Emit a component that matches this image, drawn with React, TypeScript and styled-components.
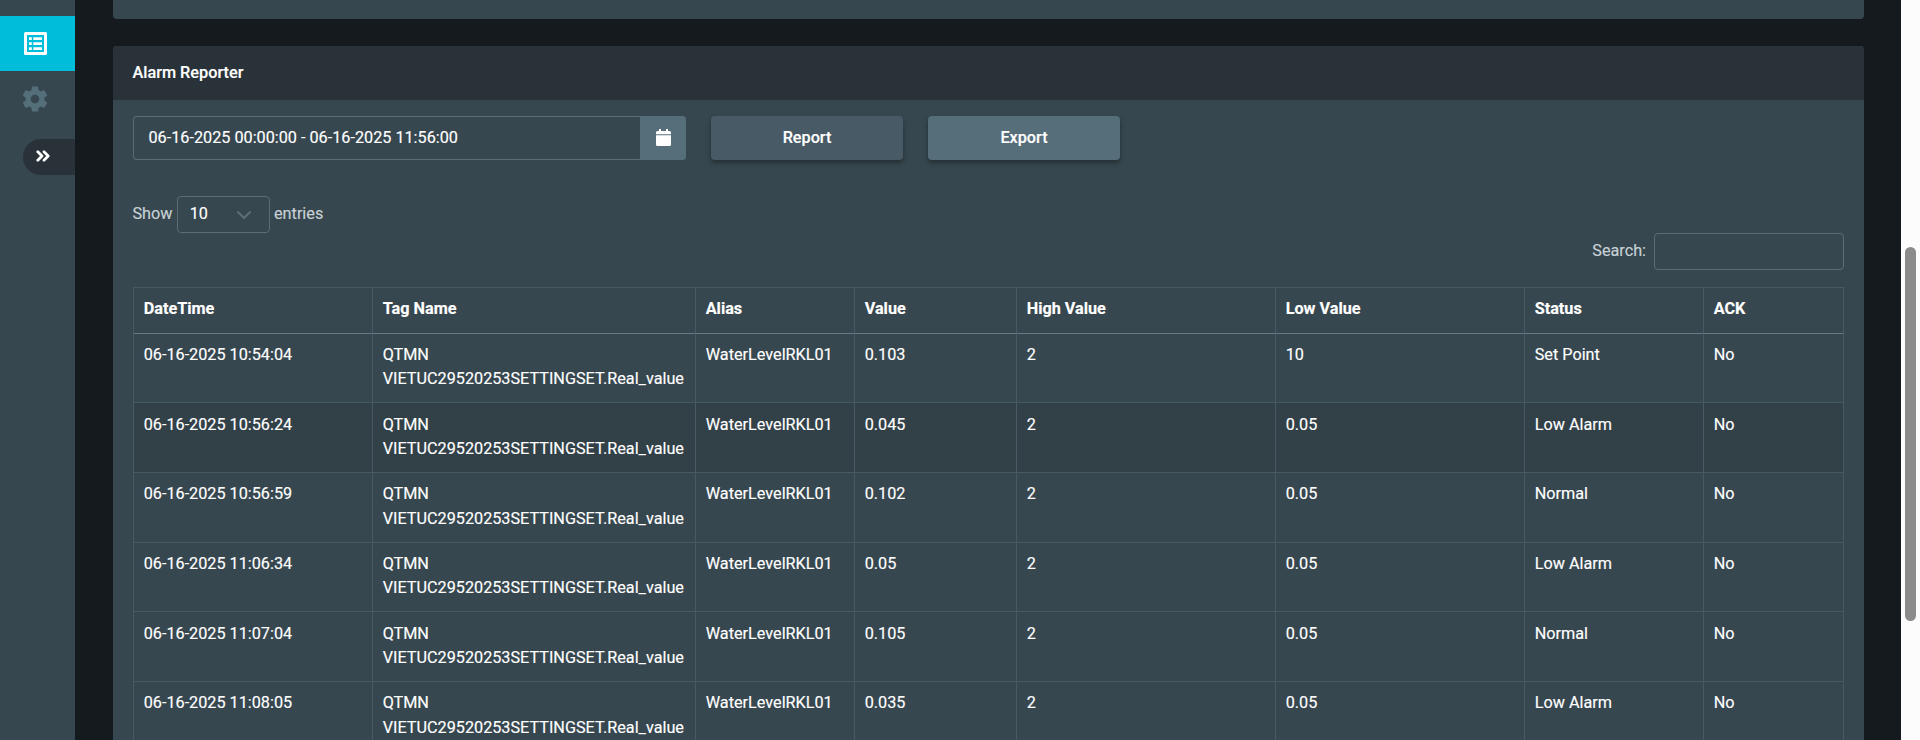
import styled, { createGlobalStyle } from "styled-components";

type Alarm = {
  time: string;
  value: string;
  low: string;
  status: string;
};

const columns = ["DateTime", "Tag Name", "Alias", "Value", "High Value", "Low Value", "Status", "ACK"];

const alarms: Alarm[] = [
  { time: "06-16-2025 10:54:04", value: "0.103", low: "10", status: "Set Point" },
  { time: "06-16-2025 10:56:24", value: "0.045", low: "0.05", status: "Low Alarm" },
  { time: "06-16-2025 10:56:59", value: "0.102", low: "0.05", status: "Normal" },
  { time: "06-16-2025 11:06:34", value: "0.05", low: "0.05", status: "Low Alarm" },
  { time: "06-16-2025 11:07:04", value: "0.105", low: "0.05", status: "Normal" },
  { time: "06-16-2025 11:08:05", value: "0.035", low: "0.05", status: "Low Alarm" },
];

const ListIcon = (): JSX.Element => (
  <svg width="23" height="23" viewBox="0 0 23 23" fill="currentColor">
    <path
      fillRule="evenodd"
      d="M1.5 0h20A1.5 1.5 0 0 1 23 1.5v20a1.5 1.5 0 0 1-1.5 1.5h-20A1.5 1.5 0 0 1 0 21.5v-20A1.5 1.5 0 0 1 1.5 0zM3 3v17h17V3z"
    />
    <path d="M5 5.200h2.800v2.800H5zM9.300 5.200H18v2.800H9.300zM5 10.200h2.800v2.800H5zM9.300 10.200H18v2.800H9.300zM5 15.200h2.800v2.800H5zM9.300 15.200H18v2.800H9.300z" />
  </svg>
);

const GearIcon = (): JSX.Element => (
  <svg width="30" height="30" viewBox="0 0 24 24" fill="currentColor">
    <path d="M19.43 12.98c.04-.32.07-.64.07-.98s-.03-.66-.07-.98l2.11-1.65c.19-.15.24-.42.12-.64l-2-3.46c-.12-.22-.39-.3-.61-.22l-2.49 1c-.52-.4-1.08-.73-1.69-.98l-.38-2.65C14.46 2.18 14.25 2 14 2h-4c-.25 0-.46.18-.49.42l-.38 2.65c-.61.25-1.17.59-1.69.98l-2.49-1c-.23-.09-.49 0-.61.22l-2 3.46c-.13.22-.07.49.12.64l2.11 1.65c-.04.32-.07.65-.07.98s.03.66.07.98l-2.11 1.65c-.19.15-.24.42-.12.64l2 3.46c.12.22.39.3.61.22l2.49-1c.52.4 1.08.73 1.69.98l.38 2.65c.03.24.24.42.49.42h4c.25 0 .46-.18.49-.42l.38-2.65c.61-.25 1.17-.59 1.69-.98l2.49 1c.23.09.49 0 .61-.22l2-3.46c.12-.22.07-.49-.12-.64l-2.11-1.65zM12 15.5c-1.93 0-3.5-1.57-3.5-3.5s1.57-3.5 3.5-3.5 3.5 1.57 3.5 3.5-1.57 3.5-3.5 3.5z" />
  </svg>
);

const Sidebar = (): JSX.Element => {
  return (
    <Side>
      <MenuItem $active>
        <ListIcon />
      </MenuItem>
      <MenuItem>
        <GearIcon />
      </MenuItem>
      <Toggle>
        <svg width="14" height="12" viewBox="0 0 14 12">
          <path d="M1.8 1.8 6 6 1.8 10.2M8 1.8 12.2 6 8 10.2" />
        </svg>
      </Toggle>
    </Side>
  );
};

const Filters = (): JSX.Element => {
  return (
    <FilterBar>
      <DateRange>
        <span>06-16-2025 00:00:00 - 06-16-2025 11:56:00</span>
        <DateButton>
          <svg width="15" height="17" viewBox="0 0 15 17">
            <path d="M3 0h2v2h5V0h2v2h1.5A1.5 1.5 0 0 1 15 3.5V5.3H0V3.5A1.5 1.5 0 0 1 1.5 2H3zM0 6.3h15v9.2a1.5 1.5 0 0 1-1.5 1.5h-12A1.5 1.5 0 0 1 0 15.5z" />
          </svg>
        </DateButton>
      </DateRange>
      <Button $color="#475a65">Report</Button>
      <Button $color="#566e7a">Export</Button>
    </FilterBar>
  );
};

const AlarmTable = (): JSX.Element => {
  return (
    <Table>
      <HeadRow>
        {columns.map((name) => (
          <Cell key={name}>{name}</Cell>
        ))}
      </HeadRow>
      {alarms.map((alarm, index) => (
        <Row key={alarm.time} $hover={index === 1}>
          <Cell>{alarm.time}</Cell>
          <Cell>QTMN VIETUC29520253SETTINGSET.Real_value</Cell>
          <Cell>WaterLevelRKL01</Cell>
          <Cell>{alarm.value}</Cell>
          <Cell>2</Cell>
          <Cell>{alarm.low}</Cell>
          <Cell>{alarm.status}</Cell>
          <Cell>No</Cell>
        </Row>
      ))}
    </Table>
  );
};

const App = (): JSX.Element => {
  return (
    <>
      <GlobalStyle />
      <Page>
        <Sidebar />
        <Content>
          <PreviousCard />
          <Card>
            <CardHeader>Alarm Reporter</CardHeader>
            <CardBody>
              <Filters />
              <Length>
                Show
                <Select>
                  10
                  <svg width="16" height="10" viewBox="0 0 16 10">
                    <path d="M1.5 1.5 8 8l6.5-6.5" />
                  </svg>
                </Select>
                entries
              </Length>
              <Search>
                Search:
                <SearchInput />
              </Search>
              <AlarmTable />
            </CardBody>
          </Card>
        </Content>
        <ScrollTrack>
          <ScrollThumb />
        </ScrollTrack>
      </Page>
    </>
  );
};

const GlobalStyle = createGlobalStyle`
  * {
    box-sizing: border-box;
  }
  body {
    margin: 0;
    overflow: hidden;
    background: #141a1e;
    color: #fff;
    font-family: Roboto, sans-serif;
    font-size: 16.23px;
    line-height: 24.4px;
    -webkit-text-stroke: 0.15px;
  }
`;

const Page = styled.div`
  display: flex;
  height: 740px;
  overflow: hidden;
`;

const Side = styled.nav`
  display: flex;
  flex-direction: column;
  width: 75px;
  padding-top: 16px;
  background: #37474f;
`;

const MenuItem = styled.div<{ $active?: boolean }>`
  display: flex;
  align-items: center;
  justify-content: center;
  height: 55px;
  padding-right: ${({ $active }) => ($active ? "4px" : "5px")};
  background: ${({ $active }) => ($active ? "#00bdd9" : "transparent")};
  color: ${({ $active }) => ($active ? "#fff" : "#546e7a")};
`;

const Toggle = styled.div`
  display: flex;
  align-items: center;
  align-self: flex-end;
  width: 52px;
  height: 36px;
  margin-top: 13px;
  padding: 0 0 3px 13px;
  border-radius: 18px 0 0 18px;
  background: #293238;

  svg {
    fill: none;
    stroke: #fff;
    stroke-width: 2.8;
    stroke-linecap: round;
    stroke-linejoin: round;
  }
`;

const Content = styled.main`
  flex: 1;
  padding: 0 37px 0 38px;
`;

const PreviousCard = styled.section`
  height: 19px;
  margin-bottom: 27px;
  border-radius: 0 0 4px 4px;
  background: #37474f;
`;

const Card = styled.section`
  height: 720px;
  border-radius: 4px 4px 0 0;
  background: #37474f;
  overflow: hidden;
`;

const CardHeader = styled.h5`
  height: 54px;
  margin: 0;
  padding: 15px 19.5px;
  background: #293238;
  font-size: 16.25px;
  font-weight: 500;
`;

const CardBody = styled.div`
  padding: 16px 20px;
`;

const FilterBar = styled.div`
  display: flex;
  gap: 25px;
  height: 44px;
`;

const DateRange = styled.div`
  display: flex;
  align-items: center;
  justify-content: space-between;
  width: 553px;
  padding-left: 14.5px;
  border: 1px solid #5a6c75;
  border-right: 0;
  border-radius: 4px;
`;

const DateButton = styled.div`
  display: flex;
  align-items: center;
  justify-content: center;
  width: 46px;
  height: 44px;
  padding-bottom: 1px;
  border-radius: 0 4px 4px 0;
  background: #566e7a;

  svg {
    fill: #fff;
  }
`;

const Button = styled.button<{ $color: string }>`
  width: 192px;
  padding: 1px 0 0;
  border: 0;
  border-radius: 4px;
  background: ${({ $color }) => $color};
  box-shadow: 0 3px 5px rgba(0, 0, 0, 0.35);
  color: #fff;
  font: inherit;
  font-weight: 500;
`;

const Length = styled.label`
  display: flex;
  align-items: center;
  height: 37px;
  margin: 36px 0 0 -0.6px;
  color: #c8d2d6;
`;

const Select = styled.div`
  display: flex;
  align-items: center;
  justify-content: space-between;
  width: 93px;
  height: 37px;
  margin: 0 4.3px;
  padding: 0 17px 0 12px;
  border: 1px solid #5a6c75;
  border-radius: 4px;
  color: #fff;

  svg {
    fill: none;
    stroke: #5c6e77;
    stroke-width: 2;
  }
`;

const Search = styled.label`
  display: flex;
  align-items: center;
  justify-content: flex-end;
  gap: 8px;
  color: #c8d2d6;
`;

const SearchInput = styled.input`
  width: 190px;
  height: 37px;
  border: 1px solid #5a6c75;
  border-radius: 4px;
  background: transparent;
`;

const Table = styled.div`
  width: 1711px;
  margin-top: 17px;
  border: 1px solid #465a63;
  border-width: 1px 0 0 1px;
`;

const Row = styled.div<{ $hover?: boolean }>`
  display: grid;
  grid-template-columns: 239px 323px 159px 162px 259px 249px 179px 140px;
  height: 69.7px;
  background: ${({ $hover }) => ($hover ? "#324048" : "transparent")};
`;

const Cell = styled.div`
  padding: 9.15px 6px 0 9.7px;
  border: 1px solid #465a63;
  border-width: 0 1px 1px 0;
`;

const HeadRow = styled(Row)`
  height: 45.7px;
  font-weight: 700;

  ${Cell} {
    border-bottom-color: #667b85;
  }
`;

const ScrollTrack = styled.div`
  width: 19px;
  padding: 247px 0 0 4px;
  background: #fcfcfc;
`;

const ScrollThumb = styled.div`
  width: 11px;
  height: 374px;
  border-radius: 6px;
  background: #8b8b8b;
`;

export default App;
